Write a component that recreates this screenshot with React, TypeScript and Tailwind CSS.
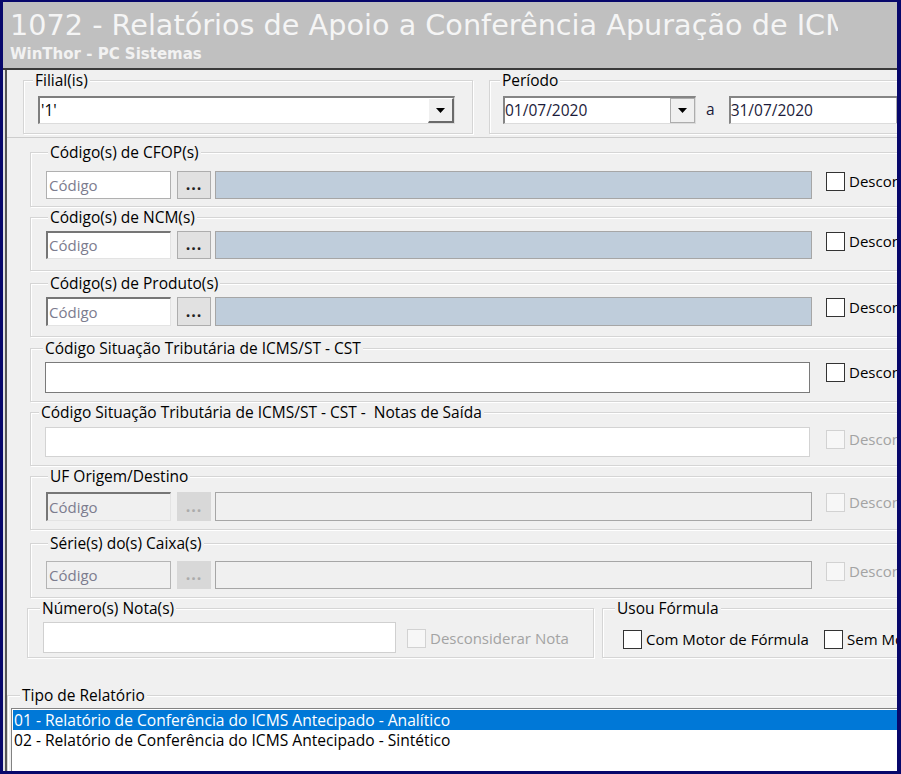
import React from "react";

type GroupProps = {
  label: string;
  className: string;
  legendClass: string;
  children: React.ReactNode;
};

// etched Windows-style group box
function Group({ label, className, legendClass, children }: GroupProps) {
  return (
    <fieldset
      className={`shrink-0 border border-[#d5d5d5] shadow-[inset_1px_1px_0_#ffffff,1px_1px_0_#ffffff] ${className}`}
    >
      <legend
        className={`bg-[#f0f0f0] px-[2px] text-[15.5px] leading-[16px] text-black ${legendClass}`}
      >
        {label}
      </legend>
      {children}
    </fieldset>
  );
}

function Check({ label, disabled = false }: { label: string; disabled?: boolean }) {
  return (
    <div className="flex shrink-0 items-center whitespace-nowrap">
      <span
        className={`h-[19px] w-[19px] shrink-0 border ${
          disabled ? "border-[#d2d2d2] bg-[#f7f7f7]" : "border-[#333333] bg-white"
        }`}
      />
      <span
        className={`ml-[4px] text-[15px] leading-[19px] ${
          disabled ? "text-[#a3a3a3]" : "text-black"
        }`}
      >
        {label}
      </span>
    </div>
  );
}

function Arrow() {
  return (
    <svg width="9" height="5" viewBox="0 0 9 5">
      <path d="M0 0h9L4.5 5z" fill="#000000" />
    </svg>
  );
}

type LookupProps = {
  padClass: string;
  heightClass: string;
  codeClass: string;
  disabled?: boolean;
};

// code box + "..." button + description field + checkbox
function LookupRow({ padClass, heightClass, codeClass, disabled = false }: LookupProps) {
  return (
    <div className={`pl-[15px] ${padClass}`}>
      <div className={`flex items-stretch ${heightClass}`}>
        <div
          className={`flex w-[125px] shrink-0 items-center text-[15px] text-[#7c7c8e] ${codeClass}`}
        >
          Código
        </div>
        <div
          className={`ml-[6px] flex w-[34px] shrink-0 items-center justify-center pb-[2px] text-[16px] font-bold tracking-[1px] ${
            disabled
              ? "bg-[#d8d8d8] text-[#ababab]"
              : "border border-[#adadad] bg-[#e1e1e1] text-[#222222]"
          }`}
        >
          ...
        </div>
        <div
          className={`ml-[4px] w-[597px] shrink-0 border border-[#a6a6a6] ${
            disabled ? "bg-[#f0f0f0]" : "bg-[#bfcddb]"
          }`}
        />
        <div className="ml-[14px] mt-[1px] self-start">
          <Check label="Desconsiderar" disabled={disabled} />
        </div>
      </div>
    </div>
  );
}

type TextRowProps = {
  padClass: string;
  boxClass: string;
  disabled?: boolean;
};

function TextRow({ padClass, boxClass, disabled = false }: TextRowProps) {
  return (
    <div className={`flex items-start pl-[14px] ${padClass}`}>
      <div className={`w-[765px] shrink-0 bg-white ${boxClass}`} />
      <div className={`ml-[16px] ${disabled ? "mt-[3px]" : "mt-[1px]"}`}>
        <Check label="Desconsiderar" disabled={disabled} />
      </div>
    </div>
  );
}

function DateBox({ value }: { value: string }) {
  return (
    <div className="flex h-[28px] w-[193px] shrink-0 border-b border-l-2 border-r border-t-2 border-b-[#dcdcdc] border-l-[#858585] border-r-[#dcdcdc] border-t-[#858585] bg-white">
      <div className="flex flex-1 items-center text-[15.5px] text-[#1b1b3a]">{value}</div>
      <div className="flex w-[25px] items-center justify-center border border-[#adadad] bg-[#f0f0f0]">
        <Arrow />
      </div>
    </div>
  );
}

const sunken =
  "border-b border-l-2 border-r border-t-2 border-b-[#e3e3e3] border-l-[#767676] border-r-[#e3e3e3] border-t-[#767676] pl-[1px]";

export default function App() {
  return (
    <div className="h-[774px] w-[901px] overflow-hidden bg-[#07076b] pb-[3px] pl-[3px] pr-[4px] pt-[2px]">
      <div className="flex h-full w-full flex-col overflow-hidden">
        <header className="h-[68px] shrink-0 border-b-2 border-[#3a3a3a] bg-[#c0c0c0] pl-[7px] pt-[9px] font-['DejaVu_Sans',sans-serif]">
          <div className="w-[828px] overflow-hidden whitespace-nowrap text-[28.7px] leading-[29px] text-[#f5f5f5]">
            1072 - Relatórios de Apoio a Conferência Apuração de ICMS
          </div>
          <div className="mt-[7px] text-[15px] font-bold leading-[15px] text-[#f2f2f2]">
            WinThor - PC Sistemas
          </div>
        </header>

        <main className="flex-1 overflow-hidden border-l-2 border-[#e2e2e2] bg-[#f0f0f0] font-['Open_Sans',sans-serif]">
          <div className="h-full border-l-2 border-[#555555]">
            <div className="w-[980px]">
              {/* branch + period */}
              <div className="flex h-[67px] items-start pl-[16px] pt-[2px]">
                <Group label="Filial(is)" className="w-[450px]" legendClass="ml-[9px]">
                  <div className="pb-[9px] pl-[14px] pt-[8px]">
                    <div className="flex h-[28px] w-[417px] border-b border-l-2 border-r border-t-2 border-b-[#dcdcdc] border-l-[#7e7e7e] border-r-[#dcdcdc] border-t-[#7e7e7e] bg-white">
                      <div className="flex flex-1 items-center pl-[1px] text-[15.5px] text-black">'1'</div>
                      <div className="flex w-[26px] items-center justify-center border-b-2 border-l border-r-2 border-t border-b-[#6a6a6a] border-l-white border-r-[#6a6a6a] border-t-white bg-[#f0f0f0]">
                        <Arrow />
                      </div>
                    </div>
                  </div>
                </Group>
                <Group label="Período" className="ml-[16px] w-[480px]" legendClass="ml-[10px]">
                  <div className="flex items-center pb-[9px] pl-[13px] pt-[8px]">
                    <DateBox value="01/07/2020" />
                    <span className="ml-[10px] text-[15.5px] text-[#1b1b3a]">a</span>
                    <div className="ml-[14px]">
                      <DateBox value="31/07/2020" />
                    </div>
                  </div>
                </Group>
              </div>

              {/* filters */}
              <div className="border-t border-[#cdcdcd]">
                <Group label="Código(s) de CFOP(s)" className="ml-[23px] mt-[6px] w-[940px]" legendClass="ml-[17px]">
                  <LookupRow
                    padClass="pb-[7px] pt-[11px]"
                    heightClass="h-[28px]"
                    codeClass="border border-[#b0b0b0] bg-white pl-[2px]"
                  />
                </Group>
                <Group label="Código(s) de NCM(s)" className="ml-[23px] mt-[2px] w-[940px]" legendClass="ml-[17px]">
                  <LookupRow padClass="pb-[11px] pt-[6px]" heightClass="h-[28px]" codeClass={`${sunken} bg-white`} />
                </Group>
                <Group label="Código(s) de Produto(s)" className="ml-[23px] mt-[4px] w-[940px]" legendClass="ml-[17px]">
                  <LookupRow padClass="pb-[10px] pt-[6px]" heightClass="h-[29px]" codeClass={`${sunken} bg-white`} />
                </Group>
                <Group
                  label="Código Situação Tributária de ICMS/ST - CST"
                  className="ml-[23px] mt-[3px] w-[940px]"
                  legendClass="ml-[12px]"
                >
                  <TextRow padClass="pb-[8px] pt-[6px]" boxClass="h-[31px] border border-[#7a7a7a]" />
                </Group>
                <Group
                  label="Código Situação Tributária de ICMS/ST - CST -  Notas de Saída"
                  className="ml-[23px] mt-[2px] w-[940px]"
                  legendClass="ml-[8px] whitespace-pre"
                >
                  <TextRow padClass="pb-[8px] pt-[7px]" boxClass="h-[30px] border border-[#d3d3d3]" disabled />
                </Group>
                <Group label="UF Origem/Destino" className="ml-[23px] mt-[2px] w-[940px]" legendClass="ml-[17px]">
                  <LookupRow
                    padClass="pb-[8px] pt-[8px]"
                    heightClass="h-[29px]"
                    codeClass={`${sunken} bg-[#f0f0f0]`}
                    disabled
                  />
                </Group>
                <Group label="Série(s) do(s) Caixa(s)" className="ml-[23px] mt-[5px] w-[940px]" legendClass="ml-[17px]">
                  <LookupRow
                    padClass="pb-[8px] pt-[10px]"
                    heightClass="h-[28px]"
                    codeClass="border border-[#b4b4b4] bg-[#f0f0f0] pl-[2px]"
                    disabled
                  />
                </Group>

                {/* invoice numbers + formula engine */}
                <div className="ml-[20px] mt-[2px] flex items-stretch">
                  <Group label="Número(s) Nota(s)" className="w-[567px]" legendClass="ml-[12px]">
                    <div className="flex items-center pb-[4px] pl-[15px] pt-[6px]">
                      <div className="h-[31px] w-[353px] shrink-0 border border-[#d0d0d0] bg-white" />
                      <div className="ml-[11px] mt-[2px]">
                        <Check label="Desconsiderar Nota" disabled />
                      </div>
                    </div>
                  </Group>
                  <Group label="Usou Fórmula" className="ml-[8px] w-[360px]" legendClass="ml-[12px]">
                    <div className="flex items-start pl-[20px] pt-[14px]">
                      <div className="w-[201px]">
                        <Check label="Com Motor de Fórmula" />
                      </div>
                      <Check label="Sem Motor de Fórmula" />
                    </div>
                  </Group>
                </div>

                {/* report type */}
                <Group label="Tipo de Relatório" className="mt-[29px] w-[960px]" legendClass="ml-[12px]">
                  <div className="pl-[3px] pt-[5px]">
                    <div className="h-[90px] w-[940px] border border-[#828282] bg-white p-[1px] text-[15.6px] leading-[20px]">
                      <div className="bg-[#0078d7] pl-[1px] text-white">
                        01 - Relatório de Conferência do ICMS Antecipado - Analítico
                      </div>
                      <div className="pl-[1px] text-black">
                        02 - Relatório de Conferência do ICMS Antecipado - Sintético
                      </div>
                    </div>
                  </div>
                </Group>
              </div>
            </div>
          </div>
        </main>
      </div>
    </div>
  );
}
